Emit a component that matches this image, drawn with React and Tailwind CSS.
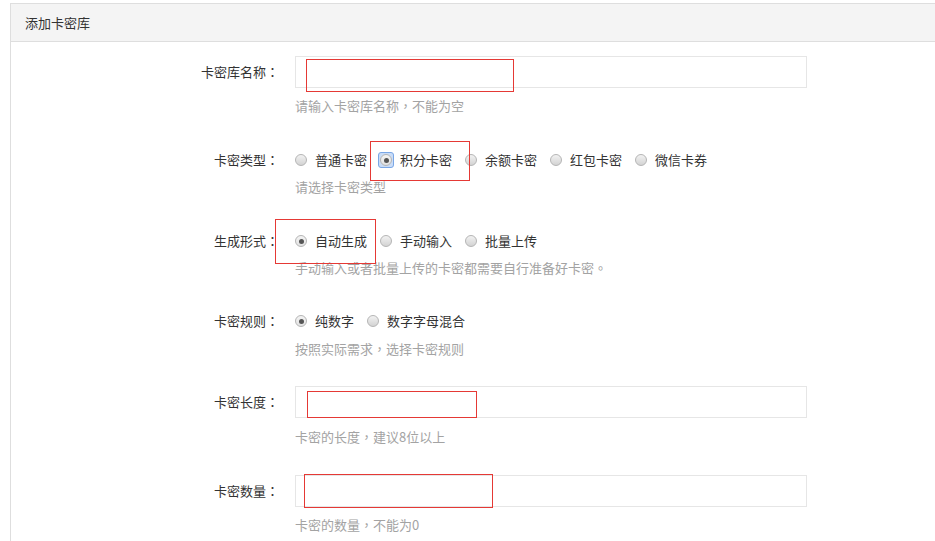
import React from "react";

const P = ({ children }) => (
  <span style={{ fontFamily: '"Noto Sans CJK TC", "Noto Sans CJK SC", sans-serif' }}>{children}</span>
);

function Radio({ checked, focused }) {
  return (
    <span className="relative flex items-center justify-center w-[12px] h-[12px] shrink-0">
      {focused && (
        <span className="absolute -inset-[2px] rounded-[3px] border border-[#7aa7e6] bg-[#c9dcf7]" />
      )}
      <span
        className={
          "relative block w-[12px] h-[12px] rounded-full border border-[#b5b5b5] " +
          (checked
            ? "bg-gradient-to-b from-[#f4f4f4] to-[#e2e2e2]"
            : "bg-gradient-to-b from-[#f2f2f2] to-[#d3d3d3]")
        }
      />
      {checked && (
        <span className="absolute w-[5px] h-[5px] rounded-full bg-[#555]" />
      )}
    </span>
  );
}

function RadioGroup({ items, checkedIndex, focusedIndex }) {
  return (
    <div className="flex items-center h-5">
      {items.map((t, i) => (
        <div key={t} className="flex items-center mr-[13px]">
          <Radio checked={i === checkedIndex} focused={i === focusedIndex} />
          <span className="ml-[8px] text-[#333] leading-5 whitespace-nowrap">{t}</span>
        </div>
      ))}
    </div>
  );
}

function RedBox({ className }) {
  return <div className={"absolute border border-[#e53935] pointer-events-none " + className} />;
}

function Label({ text, h }) {
  return (
    <div className={"w-[268px] shrink-0 text-[#333] flex items-center justify-end whitespace-nowrap " + h}>
      {text}
      <P>：</P>
    </div>
  );
}

function Help({ children, className }) {
  return <div className={"leading-5 text-[#a3a3a3] whitespace-nowrap " + className}>{children}</div>;
}

export default function App() {
  return (
    <div
      className="bg-white min-h-[560px] pt-[3px] pl-[10px] overflow-hidden text-[13px]"
      style={{ fontFamily: '"Noto Sans CJK SC", "Noto Sans", sans-serif' }}
    >
      <div className="w-[926px] border border-[#dedede] min-h-[560px]">
        <div className="h-[38px] bg-[#f4f4f4] border-b border-[#dedede] flex items-center pl-[14px] text-[#333]">
          添加卡密库
        </div>
        <div className="pt-[14px]">
          {/* group 1 */}
          <div className="flex">
            <Label text="卡密库名称" h="h-[32px]" />
            <div className="ml-[16px]">
              <div className="relative w-[512px] h-[32px] border border-[#e6e6e6] bg-white">
                <RedBox className="left-[10px] top-[2px] w-[208px] h-[33px]" />
              </div>
              <Help className="mt-2">请输入卡密库名称<P>，</P>不能为空</Help>
            </div>
          </div>

          {/* group 2 */}
          <div className="flex mt-[34px]">
            <Label text="卡密类型" h="h-5" />
            <div className="ml-[16px]">
              <div className="relative">
                <RadioGroup items={["普通卡密", "积分卡密", "余额卡密", "红包卡密", "微信卡券"]} checkedIndex={1} focusedIndex={1} />
                <RedBox className="left-[75px] -top-[9px] w-[100px] h-[40px]" />
              </div>
              <Help className="mt-[7px]">请选择卡密类型</Help>
            </div>
          </div>

          {/* group 3 */}
          <div className="flex mt-[34px]">
            <Label text="生成形式" h="h-5" />
            <div className="ml-[16px]">
              <div className="relative">
                <RadioGroup items={["自动生成", "手动输入", "批量上传"]} checkedIndex={0} />
                <RedBox className="-left-[20px] -top-[12px] w-[101px] h-[45px]" />
              </div>
              <Help className="mt-[7px]">手动输入或者批量上传的卡密都需要自行准备好卡密<P>。</P></Help>
            </div>
          </div>

          {/* group 4 */}
          <div className="flex mt-[33px]">
            <Label text="卡密规则" h="h-5" />
            <div className="ml-[16px]">
              <RadioGroup items={["纯数字", "数字字母混合"]} checkedIndex={0} />
              <Help className="mt-2">按照实际需求<P>，</P>选择卡密规则</Help>
            </div>
          </div>

          {/* group 5 */}
          <div className="flex mt-[27px]">
            <Label text="卡密长度" h="h-[32px]" />
            <div className="ml-[16px]">
              <div className="relative w-[512px] h-[32px] border border-[#e6e6e6] bg-white">
                <RedBox className="left-[11px] top-[4px] w-[170px] h-[27px]" />
              </div>
              <Help className="mt-[9px]">卡密的长度<P>，</P>建议8位以上</Help>
            </div>
          </div>

          {/* group 6 */}
          <div className="flex mt-[28px]">
            <Label text="卡密数量" h="h-[32px]" />
            <div className="ml-[16px]">
              <div className="relative w-[512px] h-[32px] border border-[#e6e6e6] bg-white">
                <RedBox className="left-[8px] -top-[2px] w-[189px] h-[34px]" />
              </div>
              <Help className="mt-2">卡密的数量<P>，</P>不能为0</Help>
            </div>
          </div>
        </div>
      </div>
    </div>
  );
}
